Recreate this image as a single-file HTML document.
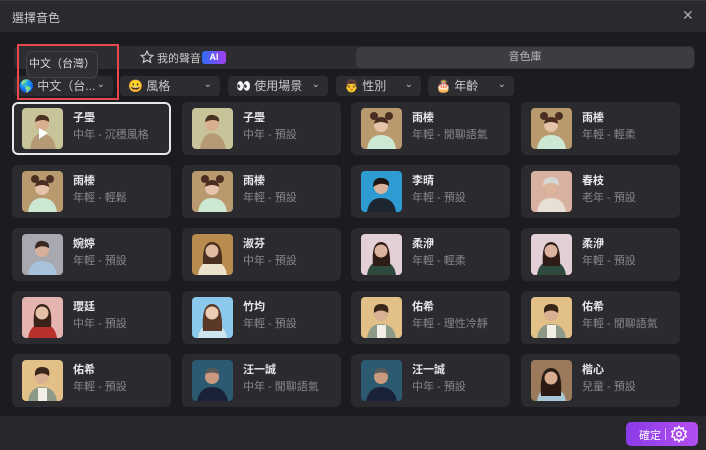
<!DOCTYPE html>
<html><head><meta charset="utf-8"><style>
*{margin:0;padding:0;box-sizing:border-box}
body{width:706px;height:450px;background:#1c1c20;font-family:"Liberation Sans","Noto Sans CJK TC",sans-serif;position:relative;overflow:hidden;color:#ddd}
.a{position:absolute}
.hdr{left:0;top:0;width:706px;height:32px;background:#2a2a2e;border-top:1px solid #3a3a3e}
.ft{left:0;top:416px;width:706px;height:34px;background:#28282c}
.card{position:absolute;width:159px;height:53px;background:#2a2a2f;border-radius:6px}
.card svg{position:absolute;left:10px;top:6px;width:41px;height:41px;border-radius:4px}
.card .n{position:absolute;left:61px;top:7px;font-size:11px;color:#e8e8ea;font-weight:600}
.card .s{position:absolute;left:61px;top:24px;font-size:11px;color:#87878c}
.f{position:absolute;top:76px;height:20px;background:#2c2c31;border-radius:4px;font-size:12px;color:#c8c8cc;line-height:20px}
.f .ch{position:absolute;right:8px;top:-1px;font-size:10px;color:#bbb}
</style></head><body>
<div class="a hdr"><div class="a" style="left:12px;top:8px;font-size:12px;color:#c8c8cc">選擇音色</div><div class="a" style="left:682px;top:6px;font-size:14px;color:#aaa">✕</div></div>

<div class="a" style="left:14px;top:46px;width:681px;height:23px;background:#2c2c31;border-radius:5px"></div>
<div class="a" style="left:356px;top:47px;width:338px;height:21px;background:#3c3c41;border-radius:5px;font-size:11px;color:#bbb;text-align:center;line-height:21px">音色庫</div>
<svg class="a" style="left:140px;top:50px" width="14" height="14" viewBox="0 0 24 24" fill="none" stroke="#ccc" stroke-width="2"><path d="M12 2l3 6.5 7 .8-5.2 4.8 1.5 7L12 17.5 5.7 21.1l1.5-7L2 9.3l7-.8z"/></svg>
<div class="a" style="left:157px;top:50px;font-size:11px;color:#ccc">我的聲音</div>
<div class="a" style="left:202px;top:51px;width:24px;height:13px;border-radius:3px;background:linear-gradient(90deg,#2f6df6,#a23ef0);color:#fff;font-size:9px;font-weight:bold;text-align:center;line-height:13px">AI</div>

<div class="f" style="left:14px;width:99px"><span style="margin-left:5px">🌎 中文（台...</span><span class="ch">⌄</span></div>
<div class="f" style="left:120px;width:100px"><span style="margin-left:8px">😀 風格</span><span class="ch">⌄</span></div>
<div class="f" style="left:228px;width:100px"><span style="margin-left:8px">👀 使用場景</span><span class="ch">⌄</span></div>
<div class="f" style="left:336px;width:85px"><span style="margin-left:8px">👨 性別</span><span class="ch">⌄</span></div>
<div class="f" style="left:428px;width:86px"><span style="margin-left:8px">🎂 年齡</span><span class="ch">⌄</span></div>

<div class="a" style="left:26px;top:51px;width:72px;height:27px;background:#2f2f33;border:1px solid #444;border-radius:6px;font-size:11px;color:#ddd;line-height:25px;text-align:center">中文（台灣）</div>
<div class="a" style="left:17px;top:44px;width:102px;height:56px;border:2px solid #e5484d"></div>

<!-- row 1 -->
<div class="card" style="left:12px;top:102px;border:2px solid #e8e8e8"><svg viewBox="0 0 41 41" style="left:8px;top:4px"><rect width="41" height="41" fill="#c9c39a"/><path d="M8 41 Q10 26 20 25 Q31 26 34 41Z" fill="#b59a76"/><circle cx="20" cy="16" r="7" fill="#d9b08f"/><path d="M13 14 Q14 6 21 7 Q28 8 27 14 Q22 10 13 14Z" fill="#4a3222"/><path d="M17 20 L26 25 L17 31Z" fill="#fff"/></svg><div class="n" style="left:59px;top:5px">子璺</div><div class="s" style="left:59px;top:22px">中年 - 沉穩風格</div></div>
<div class="card" style="left:182px;top:102px"><svg viewBox="0 0 41 41"><rect width="41" height="41" fill="#c9c39a"/><path d="M8 41 Q10 26 20 25 Q31 26 34 41Z" fill="#b59a76"/><circle cx="20" cy="16" r="7" fill="#d9b08f"/><path d="M13 14 Q14 6 21 7 Q28 8 27 14 Q22 10 13 14Z" fill="#4a3222"/></svg><div class="n">子璺</div><div class="s">中年 - 預設</div></div>
<div class="card" style="left:351px;top:102px"><svg viewBox="0 0 41 41"><rect width="41" height="41" fill="#b89a6e"/><path d="M6 41 Q8 27 20 27 Q33 27 35 41Z" fill="#cde8d2"/><circle cx="20" cy="17" r="7" fill="#e6c3ab"/><circle cx="13" cy="8" r="4" fill="#4b2e22"/><circle cx="28" cy="8" r="4" fill="#4b2e22"/><path d="M13 16 Q14 9 20 9 Q27 9 27 16 Q20 12 13 16Z" fill="#4b2e22"/></svg><div class="n">雨榛</div><div class="s">年輕 - 閒聊語氣</div></div>
<div class="card" style="left:521px;top:102px"><svg viewBox="0 0 41 41"><rect width="41" height="41" fill="#b89a6e"/><path d="M6 41 Q8 27 20 27 Q33 27 35 41Z" fill="#cde8d2"/><circle cx="20" cy="17" r="7" fill="#e6c3ab"/><circle cx="13" cy="8" r="4" fill="#4b2e22"/><circle cx="28" cy="8" r="4" fill="#4b2e22"/><path d="M13 16 Q14 9 20 9 Q27 9 27 16 Q20 12 13 16Z" fill="#4b2e22"/></svg><div class="n">雨榛</div><div class="s">年輕 - 輕柔</div></div>
<!-- row 2 -->
<div class="card" style="left:12px;top:165px"><svg viewBox="0 0 41 41"><rect width="41" height="41" fill="#b89a6e"/><path d="M6 41 Q8 27 20 27 Q33 27 35 41Z" fill="#cde8d2"/><circle cx="20" cy="17" r="7" fill="#e6c3ab"/><circle cx="13" cy="8" r="4" fill="#4b2e22"/><circle cx="28" cy="8" r="4" fill="#4b2e22"/><path d="M13 16 Q14 9 20 9 Q27 9 27 16 Q20 12 13 16Z" fill="#4b2e22"/></svg><div class="n">雨榛</div><div class="s">年輕 - 輕鬆</div></div>
<div class="card" style="left:182px;top:165px"><svg viewBox="0 0 41 41"><rect width="41" height="41" fill="#b89a6e"/><path d="M6 41 Q8 27 20 27 Q33 27 35 41Z" fill="#cde8d2"/><circle cx="20" cy="17" r="7" fill="#e6c3ab"/><circle cx="13" cy="8" r="4" fill="#4b2e22"/><circle cx="28" cy="8" r="4" fill="#4b2e22"/><path d="M13 16 Q14 9 20 9 Q27 9 27 16 Q20 12 13 16Z" fill="#4b2e22"/></svg><div class="n">雨榛</div><div class="s">年輕 - 預設</div></div>
<div class="card" style="left:351px;top:165px"><svg viewBox="0 0 41 41"><rect width="41" height="41" fill="#2f9bd3"/><path d="M6 41 Q8 27 20 27 Q33 27 35 41Z" fill="#1c2530"/><circle cx="20" cy="16" r="7" fill="#d8b29a"/><path d="M12 16 Q12 6 21 7 Q29 8 28 15 Q20 10 12 16Z" fill="#1e1612"/></svg><div class="n">李晴</div><div class="s">年輕 - 預設</div></div>
<div class="card" style="left:521px;top:165px"><svg viewBox="0 0 41 41"><rect width="41" height="41" fill="#d9b1a0"/><path d="M6 41 Q8 27 20 27 Q33 27 35 41Z" fill="#e8e0d6"/><circle cx="20" cy="16" r="7" fill="#dcb59c"/><path d="M12 15 Q12 6 20 6 Q29 6 28 15 Q20 9 12 15Z" fill="#d8d6d4"/></svg><div class="n">春枝</div><div class="s">老年 - 預設</div></div>
<!-- row 3 -->
<div class="card" style="left:12px;top:228px"><svg viewBox="0 0 41 41"><rect width="41" height="41" fill="#a8a8b0"/><path d="M6 41 Q8 27 20 27 Q33 27 35 41Z" fill="#a9c2dc"/><circle cx="20" cy="16" r="7" fill="#d6b09a"/><path d="M13 15 Q13 6 21 7 Q28 8 27 14 Q20 10 13 15Z" fill="#3a2a22"/></svg><div class="n">婉婷</div><div class="s">年輕 - 預設</div></div>
<div class="card" style="left:182px;top:228px"><svg viewBox="0 0 41 41"><rect width="41" height="41" fill="#b88c4e"/><path d="M6 41 Q8 27 20 27 Q33 27 35 41Z" fill="#ece2cc"/><path d="M11 30 Q10 8 20 8 Q31 8 30 30Z" fill="#4a2e1e"/><circle cx="20" cy="17" r="6.5" fill="#e0bba1"/></svg><div class="n">淑芬</div><div class="s">中年 - 預設</div></div>
<div class="card" style="left:351px;top:228px"><svg viewBox="0 0 41 41"><rect width="41" height="41" fill="#e3d0d6"/><path d="M6 41 Q8 27 20 27 Q33 27 35 41Z" fill="#2e4a3e"/><path d="M12 32 Q10 8 20 8 Q30 8 29 32Z" fill="#2e1c16"/><circle cx="20" cy="17" r="6.5" fill="#dcb39e"/></svg><div class="n">柔洢</div><div class="s">年輕 - 輕柔</div></div>
<div class="card" style="left:521px;top:228px"><svg viewBox="0 0 41 41"><rect width="41" height="41" fill="#e3d0d6"/><path d="M6 41 Q8 27 20 27 Q33 27 35 41Z" fill="#2e4a3e"/><path d="M12 32 Q10 8 20 8 Q30 8 29 32Z" fill="#2e1c16"/><circle cx="20" cy="17" r="6.5" fill="#dcb39e"/></svg><div class="n">柔洢</div><div class="s">年輕 - 預設</div></div>
<!-- row 4 -->
<div class="card" style="left:12px;top:291px"><svg viewBox="0 0 41 41"><rect width="41" height="41" fill="#e6b4b0"/><path d="M6 41 Q8 27 20 27 Q33 27 35 41Z" fill="#b8302a"/><path d="M12 30 Q10 7 20 7 Q31 7 29 30Z" fill="#3a2218"/><circle cx="20" cy="16" r="6.5" fill="#e4c0a8"/></svg><div class="n">瓔廷</div><div class="s">中年 - 預設</div></div>
<div class="card" style="left:182px;top:291px"><svg viewBox="0 0 41 41"><rect width="41" height="41" fill="#8cc8ec"/><path d="M6 41 Q8 27 20 27 Q33 27 35 41Z" fill="#cbe6ee"/><path d="M11 34 Q9 7 20 7 Q31 7 30 34Z" fill="#5a3a26"/><circle cx="20" cy="16" r="6.5" fill="#ecccb4"/></svg><div class="n">竹均</div><div class="s">年輕 - 預設</div></div>
<div class="card" style="left:351px;top:291px"><svg viewBox="0 0 41 41"><rect width="41" height="41" fill="#e2c088"/><path d="M6 41 Q8 27 20 27 Q33 27 35 41Z" fill="#8e9a88"/><rect x="16" y="28" width="9" height="13" fill="#f2efe6"/><circle cx="20" cy="17" r="7" fill="#d9b092"/><path d="M13 16 Q12 7 20 7 Q29 7 27 16 Q20 11 13 16Z" fill="#3a2618"/></svg><div class="n">佑希</div><div class="s">年輕 - 理性冷靜</div></div>
<div class="card" style="left:521px;top:291px"><svg viewBox="0 0 41 41"><rect width="41" height="41" fill="#e2c088"/><path d="M6 41 Q8 27 20 27 Q33 27 35 41Z" fill="#8e9a88"/><rect x="16" y="28" width="9" height="13" fill="#f2efe6"/><circle cx="20" cy="17" r="7" fill="#d9b092"/><path d="M13 16 Q12 7 20 7 Q29 7 27 16 Q20 11 13 16Z" fill="#3a2618"/></svg><div class="n">佑希</div><div class="s">年輕 - 閒聊語氣</div></div>
<!-- row 5 -->
<div class="card" style="left:12px;top:354px"><svg viewBox="0 0 41 41"><rect width="41" height="41" fill="#e2c088"/><path d="M6 41 Q8 27 20 27 Q33 27 35 41Z" fill="#8e9a88"/><rect x="16" y="28" width="9" height="13" fill="#f2efe6"/><circle cx="20" cy="17" r="7" fill="#d9b092"/><path d="M13 16 Q12 7 20 7 Q29 7 27 16 Q20 11 13 16Z" fill="#3a2618"/></svg><div class="n">佑希</div><div class="s">年輕 - 預設</div></div>
<div class="card" style="left:182px;top:354px"><svg viewBox="0 0 41 41"><rect width="41" height="41" fill="#2c5a70"/><path d="M5 41 Q8 27 20 27 Q33 27 36 41Z" fill="#1a2238"/><circle cx="20" cy="17" r="7" fill="#c99a80"/><path d="M13 14 Q14 8 20 8 Q27 8 27 14 Q20 11 13 14Z" fill="#5a5a5a"/></svg><div class="n">汪一誠</div><div class="s">中年 - 閒聊語氣</div></div>
<div class="card" style="left:351px;top:354px"><svg viewBox="0 0 41 41"><rect width="41" height="41" fill="#2c5a70"/><path d="M5 41 Q8 27 20 27 Q33 27 36 41Z" fill="#1a2238"/><circle cx="20" cy="17" r="7" fill="#c99a80"/><path d="M13 14 Q14 8 20 8 Q27 8 27 14 Q20 11 13 14Z" fill="#5a5a5a"/></svg><div class="n">汪一誠</div><div class="s">中年 - 預設</div></div>
<div class="card" style="left:521px;top:354px"><svg viewBox="0 0 41 41"><rect width="41" height="41" fill="#9a7a5a"/><path d="M6 41 Q8 28 20 28 Q33 28 35 41Z" fill="#a8c8d8"/><path d="M10 36 Q8 8 20 8 Q32 8 30 36Z" fill="#2a1a14"/><circle cx="20" cy="18" r="6.5" fill="#d8ac90"/></svg><div class="n">楷心</div><div class="s">兒童 - 預設</div></div>

<div class="a ft"></div>
<div class="a" style="left:626px;top:422px;width:72px;height:24px;border-radius:5px;background:linear-gradient(90deg,#8a3be8,#b34ef0)">
<div class="a" style="left:13px;top:5px;font-size:11px;color:#fff">確定</div>
<div class="a" style="left:39px;top:6px;width:1px;height:12px;background:rgba(255,255,255,.6)"></div>
<svg class="a" style="left:44px;top:3px" width="18" height="18" viewBox="0 0 24 24" fill="none" stroke="#fff" stroke-width="2"><circle cx="12" cy="12" r="3"/><path d="M12 2l2 3 3.5-1 .5 3.5 3.5 1-1.5 3.5 1.5 3.5-3.5 1-.5 3.5-3.5-1-2 3-2-3-3.5 1-.5-3.5-3.5-1L4 12 2.5 8.5l3.5-1L6.5 4 10 5z"/></svg>
</div>
</body></html>
